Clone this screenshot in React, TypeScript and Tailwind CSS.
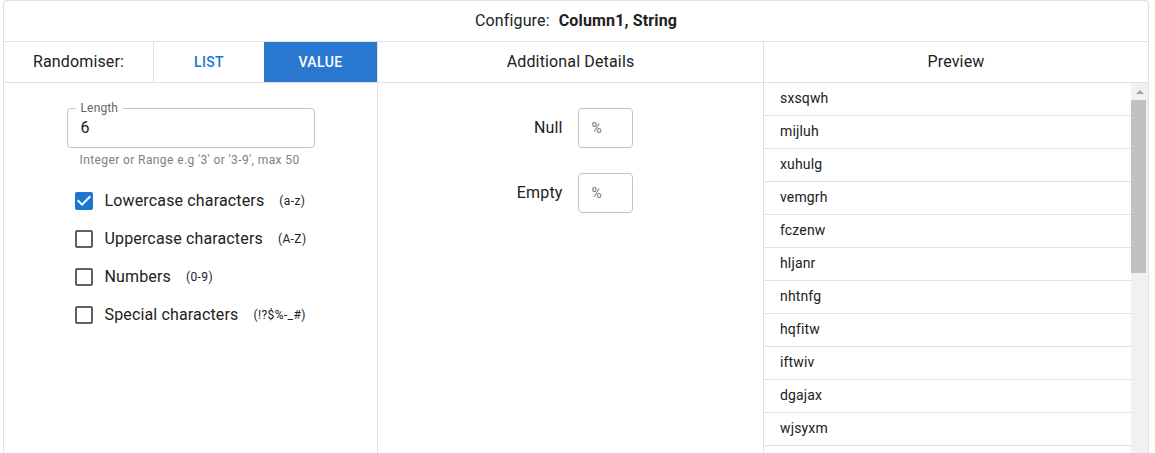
import React from 'react';

const previewRows = ['sxsqwh', 'mijluh', 'xuhulg', 'vemgrh', 'fczenw', 'hljanr', 'nhtnfg', 'hqfitw', 'iftwiv', 'dgajax', 'wjsyxm', ''];

const options = [
    { label: 'Lowercase characters', hint: '(a-z)', checked: true },
    { label: 'Uppercase characters', hint: '(A-Z)', checked: false },
    { label: 'Numbers', hint: '(0-9)', checked: false },
    { label: 'Special characters', hint: '(!?$%-_#)', checked: false },
];

const CheckIcon: React.FC<{ checked: boolean }> = ({ checked }) => (
    <svg viewBox="0 0 24 24" className={checked ? 'w-[24px] h-[24px] text-[#1976d2]' : 'w-[24px] h-[24px] text-[#5f5f5f]'} fill="currentColor">
        {checked ? (
            <path d="M19 3H5c-1.11 0-2 .9-2 2v14c0 1.1.89 2 2 2h14c1.11 0 2-.9 2-2V5c0-1.1-.89-2-2-2zm-9 14l-5-5 1.41-1.41L10 14.17l7.59-7.59L19 8l-9 9z" />
        ) : (
            <path d="M19 5v14H5V5h14m0-2H5c-1.1 0-2 .9-2 2v14c0 1.1.9 2 2 2h14c1.1 0 2-.9 2-2V5c0-1.1-.9-2-2-2z" />
        )}
    </svg>
);

const PercentField: React.FC<{ label: string }> = ({ label }) => (
    <div className="grid grid-cols-2 items-center">
        <div className="pr-2 text-right text-[16px] tracking-[0.15px] text-[#212121]">{label}</div>
        <div className="pl-[7px]">
            <div className="w-[55px] h-[40px] border border-[#c4c4c4] rounded-[4px] flex items-center pl-[13px] text-[14px] text-[#757575]">%</div>
        </div>
    </div>
);

const App: React.FC = () => {
    return (
        <div className="h-screen overflow-hidden bg-white pl-[3px] pr-[6px] font-['Roboto',sans-serif] text-[#212121]">
            <div className="h-[560px] border border-b-0 border-[#e0e0e0] rounded-t-[4px] flex flex-col">
                {/* title */}
                <div className="h-[41px] shrink-0 border-b border-[#e0e0e0] flex items-center justify-center text-[16px] tracking-[0.15px]">
                    <span>Configure:</span>
                    <span className="ml-[9px] font-bold">Column1, String</span>
                </div>

                {/* column headers */}
                <div className="h-[41px] shrink-0 border-b border-[#e0e0e0] grid grid-cols-[374px_386px_1fr] text-[16px] tracking-[0.15px]">
                    <div className="flex border-r border-[#e0e0e0]">
                        <div className="w-[150px] border-r border-[#e0e0e0] flex items-center justify-center">Randomiser:</div>
                        <div className="w-[110px] flex items-center justify-center text-[14px] font-medium text-[#1976d2] tracking-[0.4px]">LIST</div>
                        <div className="flex-1 flex items-center justify-center bg-[#2a78d0] text-[14px] font-medium text-white tracking-[0.4px]">VALUE</div>
                    </div>
                    <div className="border-r border-[#e0e0e0] flex items-center justify-center">Additional Details</div>
                    <div className="flex items-center justify-center">Preview</div>
                </div>

                {/* body */}
                <div className="flex-1 grid grid-cols-[374px_386px_1fr]">
                    <div className="border-r border-[#e0e0e0] pt-[25px]">
                        <div className="w-[248px] mx-auto">
                            <div className="relative h-[40px] border border-[#c4c4c4] rounded-[4px] flex items-center pl-[13px] text-[16px]">
                                <span className="absolute -top-[9px] left-[8px] px-[5px] bg-white text-[12px] leading-[16px] tracking-[0.15px] text-[#666]">Length</span>
                                6
                            </div>
                            <div className="mt-[4px] pl-[13px] text-[12px] leading-[16px] tracking-[0.4px] text-[#808080]">Integer or Range e.g '3' or '3-9', max 50</div>
                            <div className="mt-[14px]">
                                {options.map(o => (
                                    <div key={o.label} className="h-[38px] flex items-center pl-[5px]">
                                        <CheckIcon checked={o.checked} />
                                        <span className="ml-[9px] text-[16px] tracking-[0.15px]">{o.label}</span>
                                        <span className="ml-[15px] text-[12px] tracking-[0.4px]">{o.hint}</span>
                                    </div>
                                ))}
                            </div>
                        </div>
                    </div>

                    <div className="border-r border-[#e0e0e0] pt-[25px] flex flex-col gap-[25px]">
                        <PercentField label="Null" />
                        <PercentField label="Empty" />
                    </div>

                    <div className="flex">
                        <div className="flex-1">
                            {previewRows.map((r, i) => (
                                <div key={i} className="h-[33px] border-b border-[#e0e0e0] flex items-center pl-4 pb-[1px] text-[14px] tracking-[0.15px]">{r}</div>
                            ))}
                        </div>
                        <div className="w-[17px] bg-[#f1f1f1] flex flex-col">
                            <div className="h-[17px] flex items-center justify-center">
                                <div className="w-0 h-0 border-l-[4px] border-r-[4px] border-b-[4px] border-l-transparent border-r-transparent border-b-[#a3a3a3]" />
                            </div>
                            <div className="w-[15px] h-[173px] bg-[#c1c1c1]" />
                        </div>
                    </div>
                </div>
            </div>
        </div>
    );
};

export default App;
